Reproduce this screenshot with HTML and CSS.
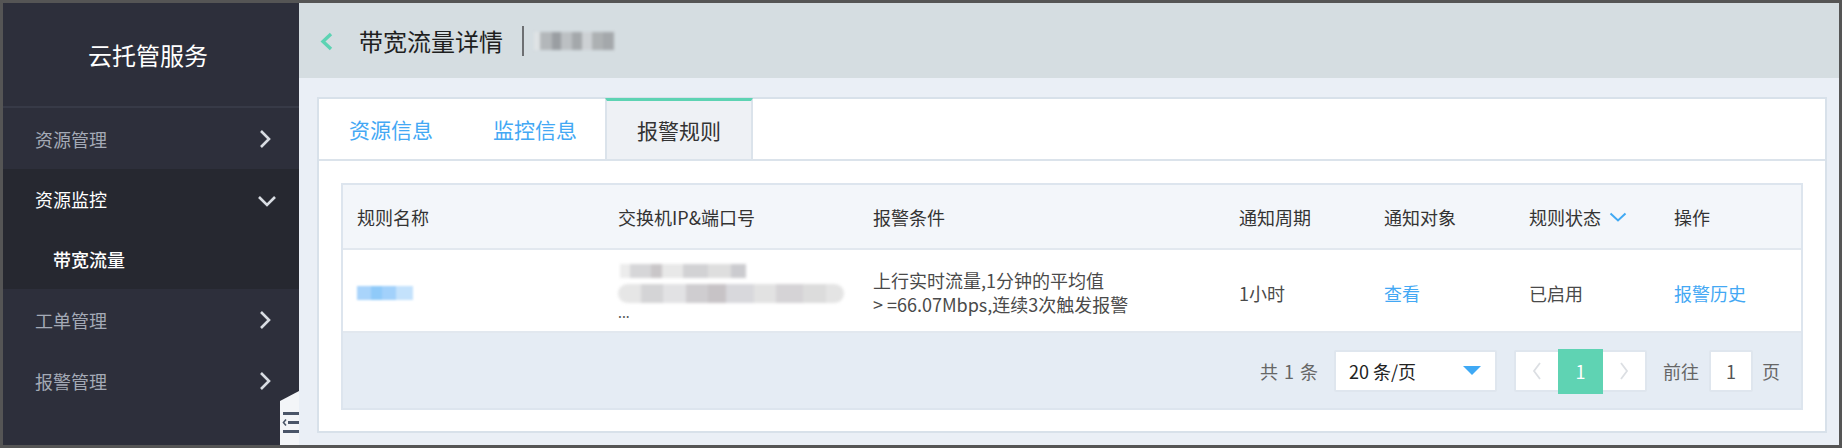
FILE: index.html
```html
<!DOCTYPE html>
<html lang="zh-CN">
<head>
<meta charset="utf-8">
<title>带宽流量详情</title>
<link rel="stylesheet" href="styles.css">
</head>
<body>
<div class="frame">
  <aside class="sidebar">
    <div class="brand">云托管服务</div>
    <nav class="menu">
      <div class="menu-item">
        <span>资源管理</span>
        <svg class="chev" width="14" height="20" viewBox="0 0 14 20"><polyline points="3,2 11,10 3,18" fill="none" stroke="#d9dde3" stroke-width="2.6"/></svg>
      </div>
      <div class="menu-group">
        <div class="menu-item open">
          <span>资源监控</span>
          <svg class="chev down" width="20" height="14" viewBox="0 0 20 14"><polyline points="2,3 10,11 18,3" fill="none" stroke="#d9dde3" stroke-width="2.6"/></svg>
        </div>
        <div class="sub-item">带宽流量</div>
      </div>
      <div class="menu-item">
        <span>工单管理</span>
        <svg class="chev" width="14" height="20" viewBox="0 0 14 20"><polyline points="3,2 11,10 3,18" fill="none" stroke="#d9dde3" stroke-width="2.6"/></svg>
      </div>
      <div class="menu-item">
        <span>报警管理</span>
        <svg class="chev" width="14" height="20" viewBox="0 0 14 20"><polyline points="3,2 11,10 3,18" fill="none" stroke="#d9dde3" stroke-width="2.6"/></svg>
      </div>
    </nav>
    <div class="collapse-handle">
      <svg width="19" height="54" viewBox="0 0 19 54">
        <polygon points="0,10 19,0 19,54 0,54" fill="#f3f5f8"/>
        <rect x="3" y="21" width="16" height="3" fill="#4a5568"/>
        <rect x="8" y="30" width="11" height="3" fill="#4a5568"/>
        <polyline points="6,28.5 3.5,31.5 6,34.5" fill="none" stroke="#4a5568" stroke-width="1.6"/>
        <rect x="3" y="39" width="16" height="3" fill="#4a5568"/>
      </svg>
    </div>
  </aside>

  <main class="main">
    <header class="topbar">
      <svg class="back" width="13" height="19" viewBox="0 0 13 19"><polyline points="11,2 3,9.5 11,17" fill="none" stroke="#5dd3b3" stroke-width="3.4"/></svg>
      <h1 class="title">带宽流量详情</h1>
      <span class="divider"></span>
      <span class="blur blur-title"></span>
    </header>

    <section class="content">
      <div class="card">
        <div class="tabs">
          <div class="tab">资源信息</div>
          <div class="tab">监控信息</div>
          <div class="tab active">报警规则</div>
        </div>

        <div class="table">
          <div class="thead row-grid">
            <div class="cell">规则名称</div>
            <div class="cell">交换机IP&amp;端口号</div>
            <div class="cell">报警条件</div>
            <div class="cell">通知周期</div>
            <div class="cell">通知对象</div>
            <div class="cell">规则状态
              <svg class="sort" width="18" height="10" viewBox="0 0 18 10"><polyline points="1.5,1.5 9,8.5 16.5,1.5" fill="none" stroke="#40a9f3" stroke-width="2"/></svg>
            </div>
            <div class="cell">操作</div>
          </div>
          <div class="tbody row-grid">
            <div class="cell"><span class="blur blur-name"></span></div>
            <div class="cell ip">
              <span class="blur blur-ip1"></span>
              <span class="blur blur-ip2"></span>
              <span class="dots">...</span>
            </div>
            <div class="cell cond">上行实时流量,1分钟的平均值<br><span class="gt">&gt;</span>=66.07Mbps,连续3次触发报警</div>
            <div class="cell">1小时</div>
            <div class="cell link">查看</div>
            <div class="cell">已启用</div>
            <div class="cell link">报警历史</div>
          </div>
          <div class="tfoot">
            <span class="total">共 1 条</span>
            <div class="select">
              <span>20 条/页</span>
              <svg width="18" height="9" viewBox="0 0 18 9"><polygon points="0,0 18,0 9,9" fill="#3fa9f5"/></svg>
            </div>
            <div class="pager">
              <span class="pg-btn"><svg width="10" height="20" viewBox="0 0 10 20"><polyline points="8,2 2,10 8,18" fill="none" stroke="#dcdfe3" stroke-width="1.8"/></svg></span>
              <span class="pg-num">1</span>
              <span class="pg-btn"><svg width="10" height="20" viewBox="0 0 10 20"><polyline points="2,2 8,10 2,18" fill="none" stroke="#dcdfe3" stroke-width="1.8"/></svg></span>
            </div>
            <span class="goto">前往</span>
            <div class="goto-input">1</div>
            <span class="goto-unit">页</span>
          </div>
        </div>
      </div>
    </section>
  </main>
</div>
</body>
</html>
```

FILE: styles.css
```css
* { box-sizing: border-box; }

html, body {
  margin: 0;
  padding: 0;
  background: #555555;
}

body {
  font-family: "Noto Sans CJK SC", "Noto Sans", "Liberation Sans", sans-serif;
}

.frame {
  width: 1842px;
  height: 448px;
  border: 3px solid #555555;
  display: flex;
  overflow: hidden;
}

/* ---------- sidebar ---------- */
.sidebar {
  position: relative;
  width: 296px;
  flex: none;
  background: #2d2f3b;
  display: flex;
  flex-direction: column;
}

.brand {
  height: 105px;
  display: flex;
  align-items: center;
  justify-content: center;
  padding-right: 6px;
  color: #ffffff;
  font-size: 24px;
  line-height: 1;
  border-bottom: 2px solid #373a47;
}

.menu {
  display: flex;
  flex-direction: column;
}

.menu-item {
  height: 61px;
  display: flex;
  align-items: center;
  justify-content: space-between;
  padding: 0 27px 0 32px;
  color: #a4aab6;
  font-size: 18px;
  line-height: 1;
}

.menu-item .chev.down {
  margin-right: -5px;
  margin-top: 4px;
}

.menu-group {
  background: #262830;
}

.menu-group .menu-item {
  height: 60px;
  color: #ffffff;
}

.sub-item {
  height: 60px;
  display: flex;
  align-items: center;
  padding-left: 50px;
  color: #ffffff;
  font-size: 18px;
  font-weight: 500;
  line-height: 1;
}

.collapse-handle {
  position: absolute;
  right: 0;
  bottom: 0;
  width: 19px;
  height: 54px;
  line-height: 0;
}

/* ---------- main ---------- */
.main {
  flex: 1;
  display: flex;
  flex-direction: column;
  background: #eaeff6;
  min-width: 0;
}

.topbar {
  height: 75px;
  flex: none;
  background: #d5dde1;
  display: flex;
  align-items: center;
  padding-left: 21px;
}

.back {
  margin-top: 2px;
}

.title {
  margin: 0 0 0 26px;
  font-size: 24px;
  font-weight: normal;
  color: #1f1f1f;
  line-height: 1;
}

.divider {
  width: 2px;
  height: 30px;
  background: #6d6f72;
  margin-left: 19px;
}

.blur {
  display: inline-block;
  filter: blur(1.6px);
}

.blur-title {
  width: 80px;
  height: 18px;
  margin-left: 10px;
  background: linear-gradient(90deg,
    #dfe3e5 0 8%, #b3b7ba 8% 22%, #9a9ea2 22% 34%, #bcc0c3 34% 48%, #a4a8ab 48% 60%,
    #cdd1d4 60% 72%, #adb1b3 72% 86%, #a4a8ab 86% 100%);
}

.content {
  flex: 1;
  padding: 19px 12px 12px 18px;
  display: flex;
}

.card {
  flex: 1;
  background: #ffffff;
  border: 2px solid #d8e1ea;
  display: flex;
  flex-direction: column;
}

.tabs {
  height: 62px;
  display: flex;
  border-bottom: 2px solid #dbe3eb;
  padding-left: 0;
}

.tab {
  display: flex;
  align-items: center;
  padding: 1px 30px 0;
  font-size: 21px;
  line-height: 1;
  color: #43a8f4;
}

.tab.active {
  color: #333333;
  background: #eef1f5;
  border-left: 2px solid #dbe3eb;
  border-right: 2px solid #dbe3eb;
  border-top: 3px solid #5dd3b3;
  margin-top: -1px;
  margin-left: -2px;
  padding: 0 30px;
}

/* ---------- table ---------- */
.table {
  margin: 22px 22px 21px 22px;
  border: 2px solid #dde5ee;
  display: flex;
  flex-direction: column;
}

.row-grid {
  display: grid;
  grid-template-columns: 261px 255px 366px 145px 145px 145px 1fr;
}

.cell {
  padding-left: 14px;
  display: flex;
  align-items: center;
  font-size: 18px;
  line-height: 1;
}

.thead {
  height: 65px;
  background: #f3f6fa;
  border-bottom: 2px solid #e2e8ef;
  color: #333333;
}

.sort {
  margin-left: 8px;
  margin-top: 1px;
}

.tbody {
  height: 83px;
  background: #ffffff;
  border-bottom: 2px solid #e2e8ef;
  color: #4a4a4a;
}

.tbody .cell {
  padding-top: 4px;
}

.cell.link {
  color: #43a8f4;
}

.cond {
  display: block;
  align-self: center;
  line-height: 24px;
  padding-top: 0 !important;
  margin-top: 3px;
}

.gt {
  margin-right: 4px;
}

.blur-name {
  width: 56px;
  height: 14px;
  background: linear-gradient(90deg, #a9d4fb 0 25%, #8fcaf9 25% 45%, #a2d1fb 45% 70%, #c4e2fc 70% 100%);
  filter: blur(1.3px);
}

.ip {
  flex-direction: column;
  align-items: flex-start;
  justify-content: center;
  padding-top: 2px !important;
}

.blur-ip1 {
  width: 126px;
  height: 14px;
  margin-left: 2px;
  background: linear-gradient(90deg,
    #ececec 0 8%, #d6d6d8 8% 25%, #c9c6c8 25% 33%, #e8e8e8 33% 50%, #d2d2d4 50% 70%,
    #dedede 70% 88%, #cbcbcf 88% 100%);
}

.blur-ip2 {
  width: 226px;
  height: 19px;
  margin-top: 6px;
  border-radius: 10px;
  background: linear-gradient(90deg,
    #e6e6e6 0 10%, #d4d4d6 10% 20%, #e2e2e4 20% 30%, #cfcdd0 30% 40%, #c7c3c6 40% 48%,
    #d8d8dc 48% 60%, #e2e2e2 60% 70%, #d5d3d6 70% 82%, #dcdcdc 82% 92%, #e4e4e4 92% 100%);
}

.dots {
  color: #555555;
  font-size: 14px;
  line-height: 10px;
  height: 12px;
  margin-top: 4px;
}

.tfoot {
  height: 75px;
  background: #e5ecf4;
  display: flex;
  align-items: center;
  justify-content: flex-end;
  padding-right: 21px;
  font-size: 18px;
  line-height: 1;
  color: #666666;
}

.total {
  word-spacing: 2px;
  margin-right: 16px;
}

.select {
  width: 163px;
  height: 42px;
  background: #ffffff;
  border: 2px solid #dfe6ee;
  border-radius: 2px;
  display: flex;
  align-items: center;
  justify-content: space-between;
  padding: 0 14px 0 13px;
  color: #222222;
}

.pager {
  margin-left: 17px;
  height: 42px;
  display: flex;
  align-items: center;
  background: #ffffff;
  border: 2px solid #dfe6ee;
  border-radius: 2px;
}

.pg-btn {
  width: 42px;
  height: 38px;
  display: flex;
  align-items: center;
  justify-content: center;
}

.pg-num {
  width: 45px;
  height: 45px;
  background: #5fd3b3;
  color: #ffffff;
  display: flex;
  align-items: center;
  justify-content: center;
  margin-top: 1px;
}

.goto {
  margin-left: 16px;
}

.goto-input {
  margin-left: 10px;
  width: 44px;
  height: 42px;
  background: #ffffff;
  border: 2px solid #dfe6ee;
  border-radius: 2px;
  display: flex;
  align-items: center;
  justify-content: center;
  color: #555555;
}

.goto-unit {
  margin-left: 9px;
}
```
